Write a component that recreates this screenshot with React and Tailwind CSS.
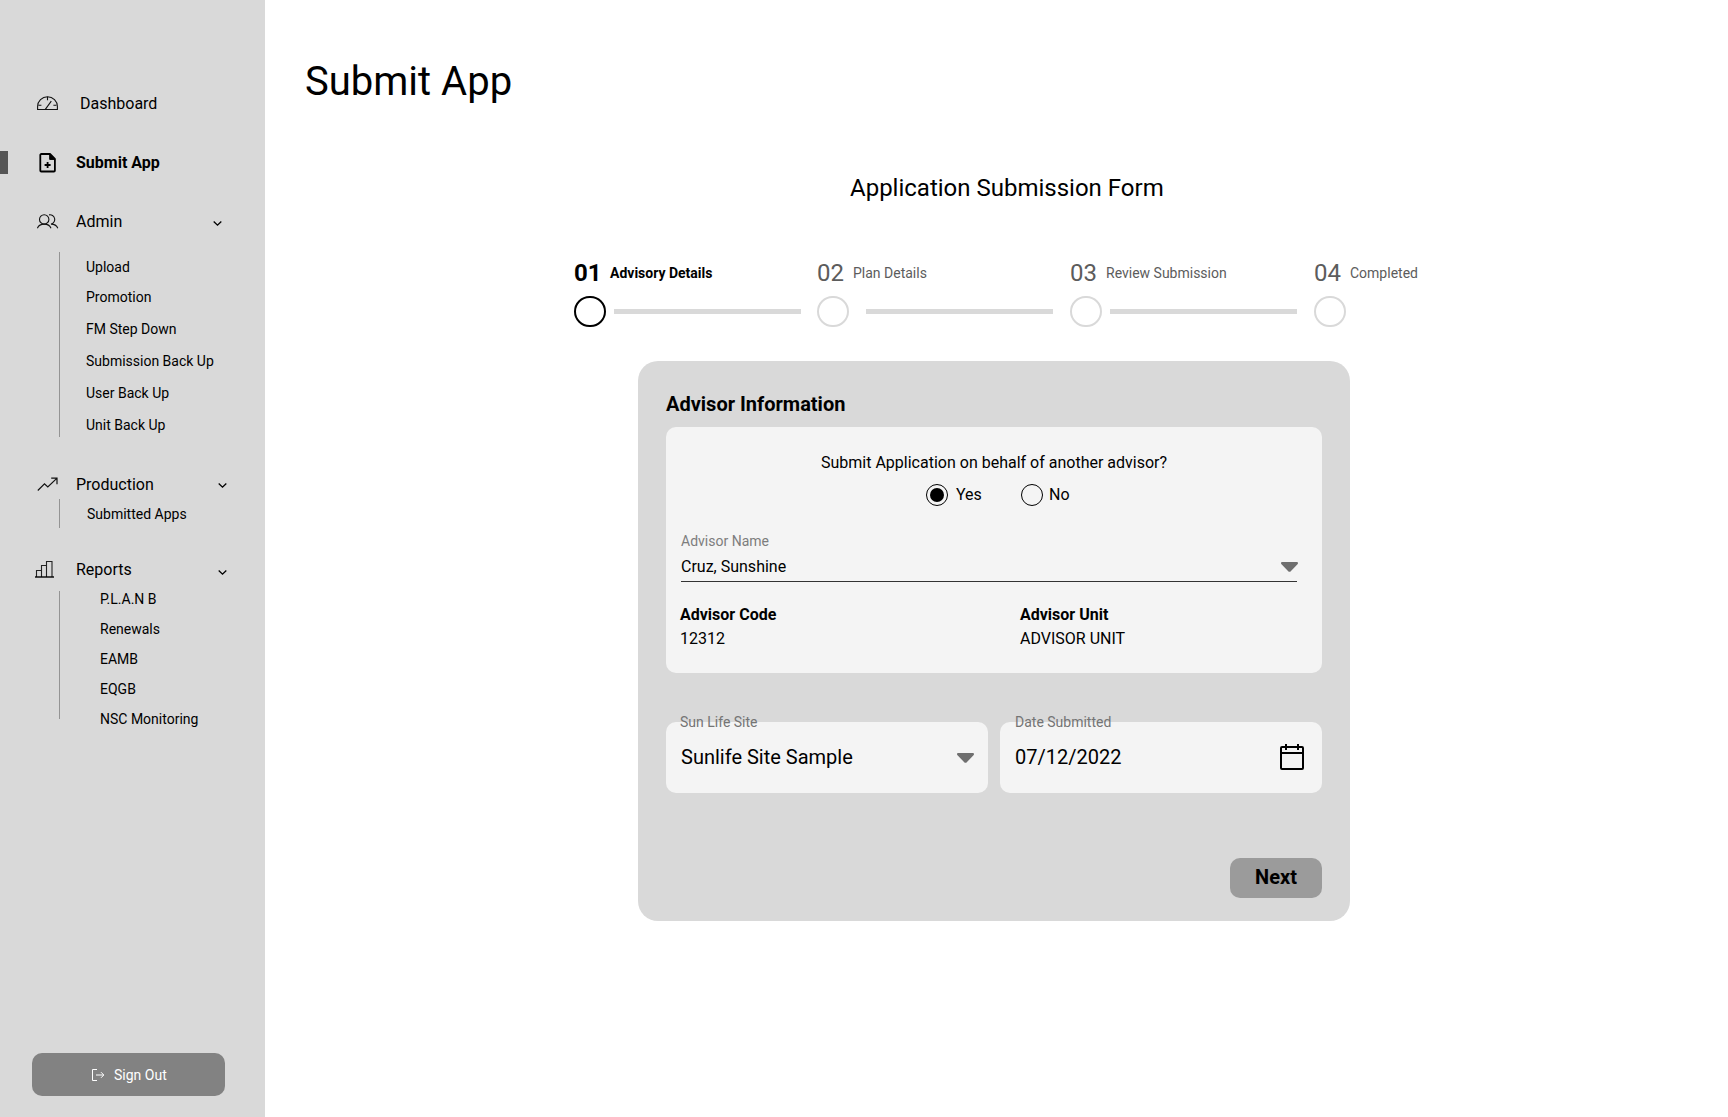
const adminLinks = ["Promotion", "FM Step Down", "Submission Back Up", "User Back Up", "Unit Back Up"];
const reportLinks = ["P.L.A.N B", "Renewals", "EAMB", "EQGB", "NSC Monitoring"];

function DashboardIcon() {
  return (
    <svg width="22" height="16" viewBox="0 0 22 16" fill="none" stroke="#111" strokeWidth="1.1">
      <path d="M.6 13.5v-3a9.9 9.7 0 0 1 19.8 0v3z" />
      <path d="M8.3 13.3 14.3 5.2M10.5.8v3.4M1.4 9.3h3M16.4 9.3h3" />
    </svg>
  );
}

function FilePlusIcon() {
  return (
    <svg width="18" height="20" viewBox="0 0 18 20" fill="none" stroke="#000" strokeWidth="1.8" strokeLinejoin="round">
      <path d="M2.3 1H11l4.9 4.9v11.6a1 1 0 0 1-1 1H2.3a1 1 0 0 1-1-1V2a1 1 0 0 1 1-1z" />
      <path d="M10.7 1.2v5.2h5.2z" fill="#000" strokeWidth="1" />
      <path d="M8.6 9v6M5.6 12h6" />
    </svg>
  );
}

function UsersIcon() {
  return (
    <svg width="22" height="15" viewBox="0 0 22 15" fill="none" stroke="#111" strokeWidth="1.1">
      <circle cx="7.2" cy="5.4" r="4.7" />
      <path d="M.4 14.2c1.1-2.7 3.9-4.1 6.8-4.1s5.7 1.4 6.8 4.1" />
      <path d="M12 .9a4.7 4.7 0 1 1 2 9.2c2.9 0 5.7 1.4 6.8 4.1" />
    </svg>
  );
}

function TrendIcon() {
  return (
    <svg width="22" height="15" viewBox="0 0 22 15" fill="none" stroke="#111" strokeWidth="1.2">
      <path d="M.8 13.5 7.5 6.8 10.8 9.9 19.8 1.4M14.2 1.2H20v6" />
    </svg>
  );
}

function BarsIcon() {
  return (
    <svg width="19" height="17" viewBox="0 0 19 17" fill="none" stroke="#222" strokeWidth="1.1">
      <path d="M1.5 16V9.5h5V16M6.5 9.5v-5h5V16M11.5 4.5v-4H17V16" />
      <path d="M0 16h19" stroke="#000" strokeWidth="1.4" />
    </svg>
  );
}

function Chevron() {
  return (
    <svg width="9" height="6" viewBox="0 0 9 6" fill="none" stroke="#000" strokeWidth="1.3">
      <path d="M.7.5 4.5 4.2 8.3.5" />
    </svg>
  );
}

function Caret() {
  return (
    <svg width="17" height="10" viewBox="0 0 17 10" fill="#6f6f6f">
      <path d="M1.3 0h14.4c1.3 0 1.7 1.4.8 2.2L10 9a2 2 0 0 1-3 0L.5 2.2C-.4 1.4 0 0 1.3 0z" />
    </svg>
  );
}

function CalendarIcon() {
  return (
    <svg width="24" height="26" viewBox="0 0 24 26" fill="none" stroke="#000" strokeWidth="2">
      <rect x="1" y="3" width="22" height="22" rx="1" />
      <path d="M1 9h22M6 0v6M18 0v6" />
    </svg>
  );
}

function SignOutIcon() {
  return (
    <svg width="13" height="12" viewBox="0 0 13 12" fill="none" stroke="#fff">
      <path d="M5 .5H.5v11H5" />
      <path d="M4 6h7.5M9 3.2 11.8 6 9 8.8" />
    </svg>
  );
}

function Step({ number, label, active, last, gap }) {
  return (
    <div>
      <div className={active ? "flex font-bold text-black" : "flex text-[#5c5c5c]"}>
        <span className="w-9 text-2xl leading-7">{number}</span>
        <span className="pt-1.5 text-sm leading-4 whitespace-nowrap">{label}</span>
      </div>
      <div className="mt-[9px] flex items-center">
        <div className={active ? "h-[31px] w-8 rounded-full border-2 border-black" : "h-[31px] w-8 rounded-full border-2 border-[#d9d9d9]"} />
        {!last && <div className={gap === "wide" ? "ml-[17px] h-[5px] w-[187px] bg-[#d9d9d9]" : "ml-2 h-[5px] w-[187px] bg-[#d9d9d9]"} />}
      </div>
    </div>
  );
}

function Sidebar() {
  return (
    <aside className="flex w-[265px] shrink-0 flex-col bg-[#d9d9d9] text-base leading-[19px]">
      <nav className="pt-[94px]">
        <div className="flex h-[19px] pl-[37px]">
          <div className="pt-0.5"><DashboardIcon /></div>
          <span className="ml-[21px]">Dashboard</span>
        </div>
        <div className="mt-[38px] flex h-[23px] items-center">
          <div className="h-[23px] w-2 bg-[#555]" />
          <div className="ml-[31px] w-[37px]"><FilePlusIcon /></div>
          <span className="font-bold">Submit App</span>
        </div>
        <div className="mt-[38px] flex h-[19px] items-center pl-[37px]">
          <UsersIcon />
          <span className="ml-[17px] w-[137px]">Admin</span>
          <div className="pt-1"><Chevron /></div>
        </div>
        <ul className="mt-[21px] ml-[59px] h-[185px] border-l border-[#949494] pt-[7px] pl-[26px] text-sm leading-4">
          <li className="h-[30px]">Upload</li>
          {adminLinks.map((l) => <li key={l} className="h-8">{l}</li>)}
        </ul>
        <div className="mt-[38px] flex h-[19px] items-center pl-[37px]">
          <TrendIcon />
          <span className="ml-[17px] w-[142px]">Production</span>
          <div className="pt-0.5"><Chevron /></div>
        </div>
        <ul className="mt-[5px] ml-[59px] h-[29px] border-l border-[#949494] pt-[7px] pl-[27px] text-sm leading-4">
          <li>Submitted Apps</li>
        </ul>
        <div className="mt-8 flex h-[19px] items-center pl-[35px]">
          <BarsIcon />
          <span className="ml-[22px] w-[142px]">Reports</span>
          <div className="pt-1.5"><Chevron /></div>
        </div>
        <ul className="mt-3 ml-[59px] h-32 border-l border-[#949494] pl-10 text-sm leading-4">
          {reportLinks.map((l) => <li key={l} className="h-[30px]">{l}</li>)}
        </ul>
      </nav>
      <button className="mt-auto mb-[21px] ml-8 flex h-[43px] w-[193px] items-center rounded-[10px] bg-[#828282] pl-[60px] text-sm leading-4 text-white">
        <SignOutIcon />
        <span className="ml-[9px]">Sign Out</span>
      </button>
    </aside>
  );
}

export default function App() {
  return (
    <div className="flex h-[1117px] w-[1728px] overflow-hidden bg-white font-['Roboto',sans-serif] text-black">
      <Sidebar />
      <main className="flex-1">
        <h1 className="mt-[58px] ml-10 text-[40px] leading-[47px]">Submit App</h1>
        <h2 className="mt-[69px] ml-[585px] text-2xl leading-7">Application Submission Form</h2>
        <div className="mt-[57px] ml-[309px] grid grid-cols-[243px_253px_244px_120px]">
          <Step number="01" label="Advisory Details" active />
          <Step number="02" label="Plan Details" gap="wide" />
          <Step number="03" label="Review Submission" />
          <Step number="04" label="Completed" last />
        </div>
        <section className="mt-[34px] ml-[373px] h-[560px] w-[712px] rounded-[20px] bg-[#d9d9d9] px-7 pt-8">
          <h3 className="text-xl leading-[23px] font-bold">Advisor Information</h3>
          <div className="mt-[11px] h-[246px] rounded-[10px] bg-[#f4f4f4] pt-[26px] pl-[14px]">
            <p className="ml-[141px] text-base leading-[19px]">Submit Application on behalf of another advisor?</p>
            <div className="mt-3 ml-[246px] flex items-center text-base leading-[19px]">
              <div className="flex size-[22px] items-center justify-center rounded-full border border-black">
                <div className="size-[14px] rounded-full bg-black" />
              </div>
              <span className="ml-2 w-[65px] pb-px">Yes</span>
              <div className="size-[22px] rounded-full border border-black" />
              <span className="ml-1.5 pb-px">No</span>
            </div>
            <div className="mt-[27px] ml-px w-[616px] border-b border-[#333]">
              <div className="text-sm leading-4 text-[#7d7d7d]">Advisor Name</div>
              <div className="mt-2 flex h-[24px] justify-between text-base leading-[19px]">
                <span>Cruz, Sunshine</span>
                <div className="-mr-px pt-[5px]"><Caret /></div>
              </div>
            </div>
            <div className="mt-[23px] grid grid-cols-[340px_1fr] gap-y-[5px] text-base leading-[19px]">
              <span className="font-bold">Advisor Code</span>
              <span className="font-bold">Advisor Unit</span>
              <span>12312</span>
              <span>ADVISOR UNIT</span>
            </div>
          </div>
          <div className="mt-[49px] grid grid-cols-2 gap-3">
            <div className="h-[71px] rounded-[10px] bg-[#f4f4f4] px-[14px]">
              <div className="-mt-2 text-sm leading-4 text-[#747474]">Sun Life Site</div>
              <div className="mt-[15px] ml-px flex h-6 items-center justify-between text-xl">
                <span>Sunlife Site Sample</span>
                <div className="pt-0.5"><Caret /></div>
              </div>
            </div>
            <div className="h-[71px] rounded-[10px] bg-[#f4f4f4] pr-[18px] pl-[15px]">
              <div className="-mt-2 text-sm leading-4 text-[#747474]">Date Submitted</div>
              <div className="mt-[15px] flex h-6 items-center justify-between text-xl">
                <span>07/12/2022</span>
                <CalendarIcon />
              </div>
            </div>
          </div>
          <button className="mt-[65px] ml-auto flex h-10 w-[92px] items-center justify-center rounded-[10px] bg-[#9b9b9b] pb-0.5 text-xl font-bold">Next</button>
        </section>
      </main>
    </div>
  );
}
